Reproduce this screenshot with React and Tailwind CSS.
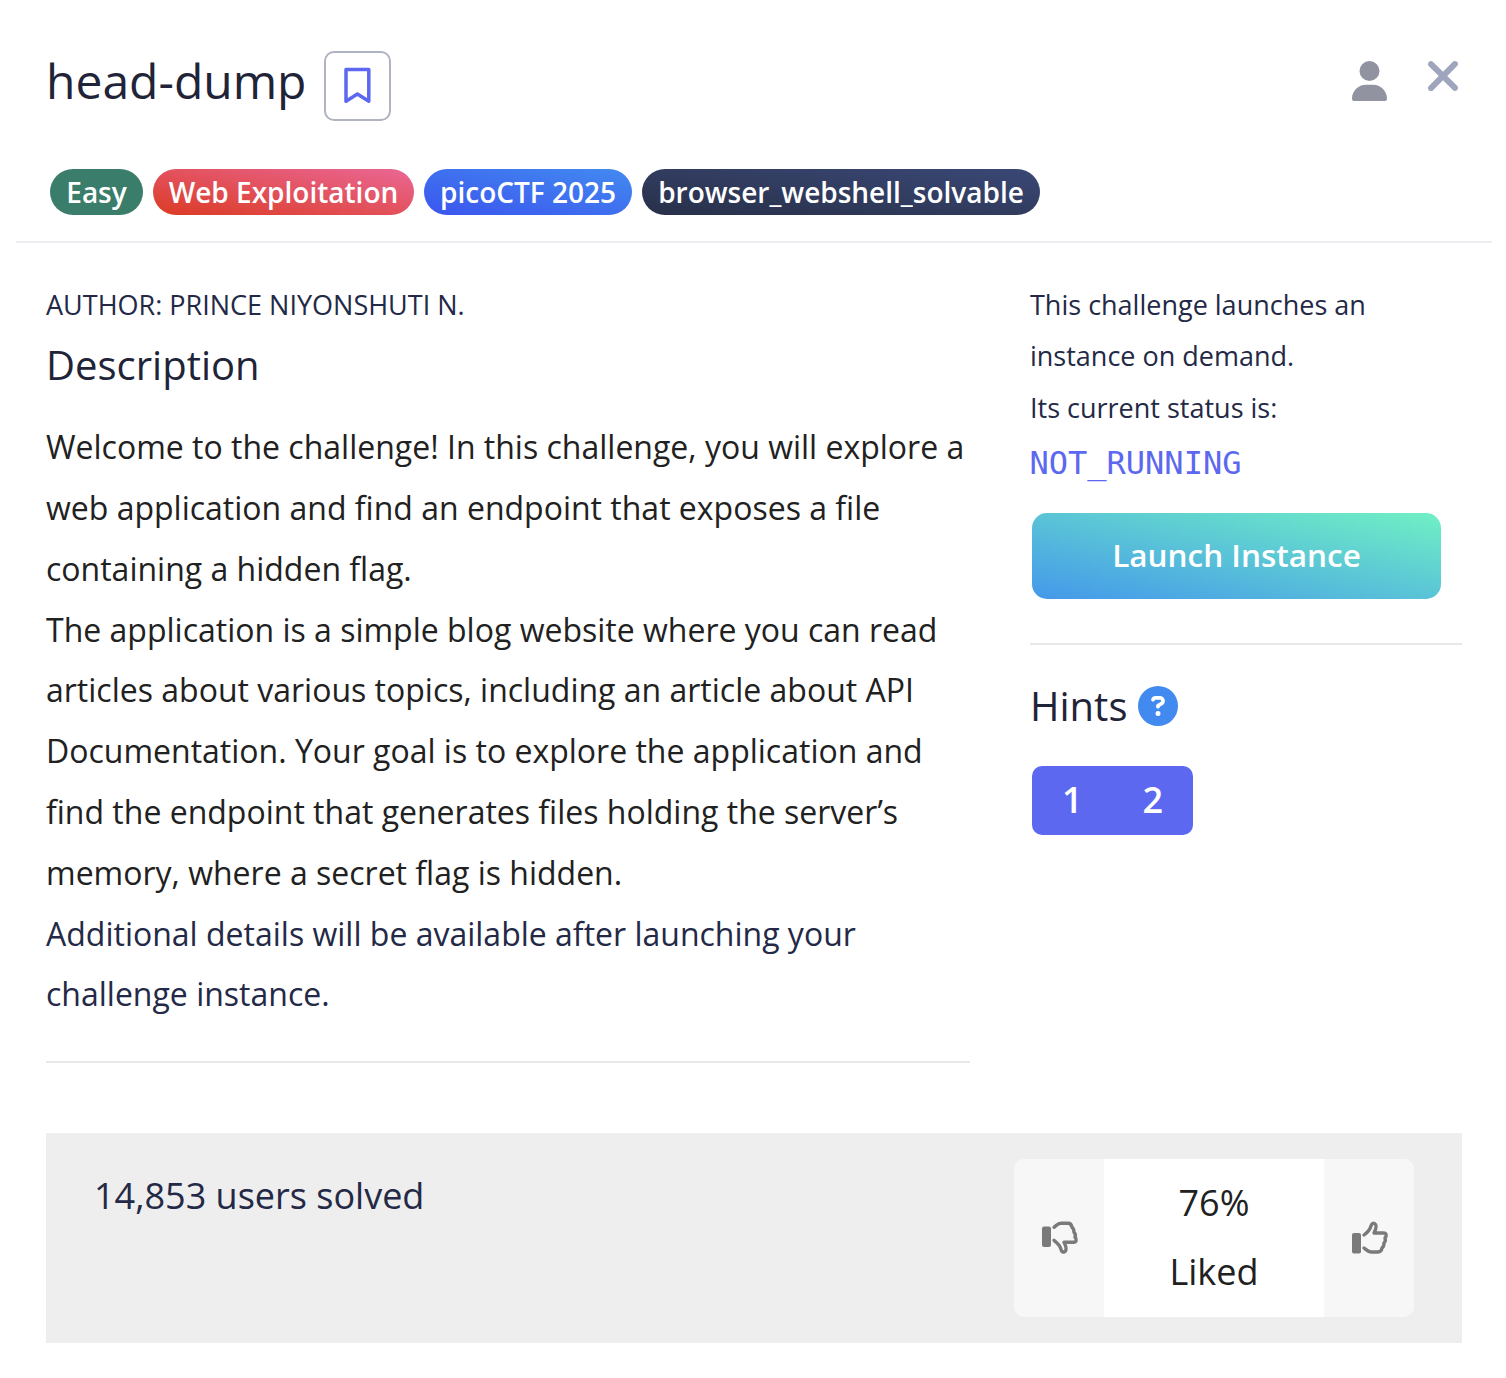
import { FaUser, FaXmark, FaCircleQuestion } from "react-icons/fa6";

const pills = [
  { label: "Easy", cls: "bg-[#3a7d6b] w-[93px]" },
  { label: "Web Exploitation", cls: "bg-[linear-gradient(to_top_right,#db3b24,#ea6795)] w-[261px]" },
  { label: "picoCTF 2025", cls: "bg-[linear-gradient(to_top_right,#3b55ee,#428af0)] w-[208px]" },
  { label: "browser_webshell_solvable", cls: "bg-[linear-gradient(to_top_right,#283048,#3a4876)] w-[398px]" },
];

function Bookmark() {
  return (
    <svg width="28" height="38" viewBox="0 0 28 38" fill="none" stroke="#5c68ef" strokeWidth="3.5" strokeLinejoin="round">
      <path d="M2 2.500H24.800V34.200L13.400 27L2 34.200Z" />
    </svg>
  );
}

const HAND = "M13 14C17 11 19.200 8 20 5C20.500 2.500 22 2 23.500 2.500C26.500 4 25 8 23 12H32.500C35.500 12 36 15 34 17C34.800 19 34 21 33 22C33 24 32.500 26 31 27C30.500 30 29.500 31 27 31H20C17 31 15 28.500 13 27";

function Thumb({ down }) {
  return (
    <svg width="38" height="34" viewBox="0 0 38 34" fill="none" stroke="#7a7a7a" strokeWidth="3.4" strokeLinecap="round" strokeLinejoin="round">
      <rect x="1" y={down ? 5.5 : 12} width="9" height="20.5" rx="2" fill="#7a7a7a" stroke="none" />
      <path d={HAND} transform={down ? "translate(0 33.3) scale(1 -1)" : undefined} />
    </svg>
  );
}

export default function App() {
  return (
    <div className="h-[1378px] w-[1506px] overflow-hidden bg-white font-['Open_Sans',sans-serif] text-[#1f2438]">
      <header className="mx-4 h-[243px] w-[1476px] border-b-2 border-[#eceef1] pl-[30px] pr-[25px] pt-[51px]">
        <div className="flex h-[70px] items-start">
          <h1 className="-mt-[3px] w-[278px] whitespace-nowrap text-[48px] leading-[66px]">head-dump</h1>
          <button className="flex h-[70px] w-[67px] items-start justify-center rounded-[10px] border-2 border-[#b0b4c0] pt-[14px]">
            <Bookmark />
          </button>
          <div className="ml-auto flex items-start">
            <FaUser className="mr-8 mt-[10px] h-10 w-[35px] text-[#9193a0]" />
            <FaXmark className="mt-px h-12 w-12 text-[#9ea5bd]" />
          </div>
        </div>
        <div className="ml-1 mt-[48px] flex gap-[10px]">
          {pills.map((p) => (
            <span key={p.label} className={"flex h-[46px] items-center justify-center whitespace-nowrap rounded-full text-[28px] font-semibold text-white " + p.cls}>{p.label}</span>
          ))}
        </div>
      </header>

      <main className="flex h-[890px] pl-[46px]">
        <section className="w-[924px]">
          <p className="mt-9 text-[27px] leading-[51.7px] text-[#232946]">AUTHOR: PRINCE NIYONSHUTI N.</p>
          <h2 className="mt-[6px] text-[40px] leading-[56px]">Description</h2>
          <div className="mt-[24.5px] whitespace-nowrap text-[32px] leading-[60.8px]">
            <p className="text-[#212121]">
              Welcome to the challenge! In this challenge, you will explore a<br />
              web application and find an endpoint that exposes a file<br />
              containing a hidden flag.<br />
              The application is a simple blog website where you can read<br />
              articles about various topics, including an article about API<br />
              Documentation. Your goal is to explore the application and<br />
              find the endpoint that generates files holding the server’s<br />
              memory, where a secret flag is hidden.
            </p>
            <p className="text-[#232946]">
              Additional details will be available after launching your<br />
              challenge instance.
            </p>
          </div>
          <hr className="mt-[35.5px] border-t-2 border-[#e8e8e8]" />
        </section>

        <aside className="ml-[60px] w-[432px]">
          <p className="mt-9 whitespace-nowrap text-[27px] leading-[51.4px] text-[#232946]">
            This challenge launches an<br />instance on demand.<br />Its current status is:
          </p>
          <p className="-ml-[0.5px] h-[60.8px] pt-[2px] font-['DejaVu_Sans_Mono',monospace] text-[32px] leading-[56px] text-[#5c68ef]">NOT_RUNNING</p>
          <button className="ml-[2px] mt-[19px] flex h-[86px] w-[409px] items-center justify-center rounded-[15px] bg-[linear-gradient(to_top_right,#4498ea,#70f0c4)] pb-[2px] text-[31.5px] font-semibold text-white">
            Launch Instance
          </button>
          <hr className="mt-[44px] border-t-2 border-[#e8e8e8]" />
          <div className="mt-[32.5px] flex items-center">
            <h2 className="w-[108px] text-[40px] leading-[56px]">Hints</h2>
            <FaCircleQuestion className="h-10 w-10 text-[#428af0]" />
          </div>
          <div className="ml-[2px] mt-[32px] flex h-[69px] w-[161px] rounded-[10px] bg-[#5c68ef] text-[36px] font-semibold leading-[67px] text-white">
            <span className="flex-1 text-center">1</span>
            <span className="flex-1 text-center">2</span>
          </div>
        </aside>
      </main>

      <footer className="ml-[46px] flex h-[210px] w-[1416px] items-start justify-between bg-[#eeeeee] px-12">
        <p className="mt-[28px] text-[36px] leading-[70px] text-[#232946]">14,853 users solved</p>
        <div className="mt-[26px] flex h-[158px] w-[400px] overflow-hidden rounded-[10px] bg-[#f7f7f7]">
          <button className="w-[90px] pl-[27px]"><Thumb down /></button>
          <div className="w-[220px] bg-white pt-[9px] text-center text-[36px] leading-[69px] text-[#212121]">76%<br />Liked</div>
          <button className="w-[90px] pl-[27px]"><Thumb /></button>
        </div>
      </footer>
    </div>
  );
}
